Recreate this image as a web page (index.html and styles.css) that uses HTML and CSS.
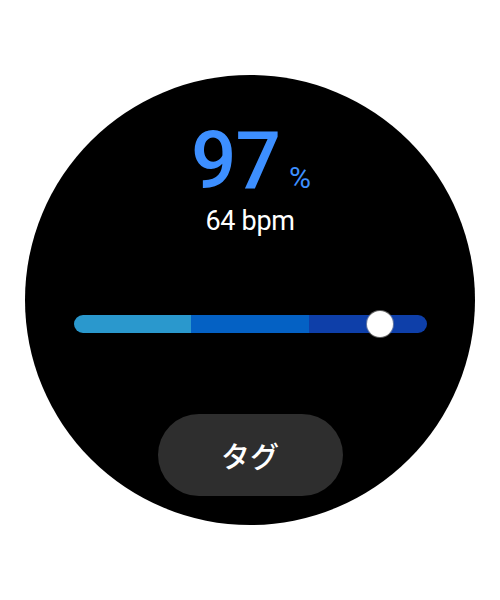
FILE: index.html
```html
<!DOCTYPE html>
<html>
<head>
<meta charset="utf-8">
<link rel="stylesheet" href="styles.css">
</head>
<body>
<div class="watch">
  <div class="reading">
    <span class="num">97</span><span class="unit">%</span>
  </div>
  <div class="bpm">64 bpm</div>
  <div class="slider">
    <div class="seg seg1"></div>
    <div class="seg seg2"></div>
    <div class="seg seg3"></div>
    <div class="thumb"></div>
  </div>
  <button class="tag">タグ</button>
</div>
</body>
</html>
```
FILE: styles.css
```css
html, body {
  margin: 0;
  padding: 0;
  background: #fff;
  width: 500px;
  height: 600px;
  overflow: hidden;
}
.watch {
  width: 450px;
  height: 450px;
  border-radius: 50%;
  background: #000;
  margin: 75px auto 0;
  display: flex;
  flex-direction: column;
  align-items: center;
  font-family: Roboto, "Noto Sans CJK JP", sans-serif;
}
.reading {
  margin-top: 46px;
  display: flex;
  align-items: baseline;
  color: #3d8fff;
  padding-left: 2px;
}
.num {
  font-size: 80px;
  line-height: 80px;
  font-weight: 500;
  letter-spacing: -1px;
}
.unit {
  font-size: 30px;
  font-weight: 400;
  margin-left: 9px;
}
.bpm {
  margin-top: 7px;
  font-size: 27px;
  line-height: 26px;
  color: #fff;
  letter-spacing: -0.3px;
}
.slider {
  position: relative;
  margin-top: 81px;
  width: 353px;
  height: 18px;
  border-radius: 9px;
  display: flex;
}
.seg {
  flex: 1;
  height: 18px;
}
.seg1 {
  background: #2a98cd;
  border-radius: 9px 0 0 9px;
}
.seg2 {
  background: #0461c4;
}
.seg3 {
  background: #0e3fa9;
  border-radius: 0 9px 9px 0;
}
.thumb {
  position: absolute;
  left: 293px;
  top: -4px;
  width: 26px;
  height: 26px;
  border-radius: 50%;
  background: #fff;
  box-shadow: 0 0 0 1px rgba(160,160,160,0.6);
}
.tag {
  margin-top: 81px;
  width: 185px;
  height: 82px;
  border-radius: 41px;
  border: none;
  background: #2e2e2e;
  color: #fff;
  font-family: "Noto Sans CJK JP", sans-serif;
  font-size: 29px;
  font-weight: 500;
  padding: 0;
}
```
